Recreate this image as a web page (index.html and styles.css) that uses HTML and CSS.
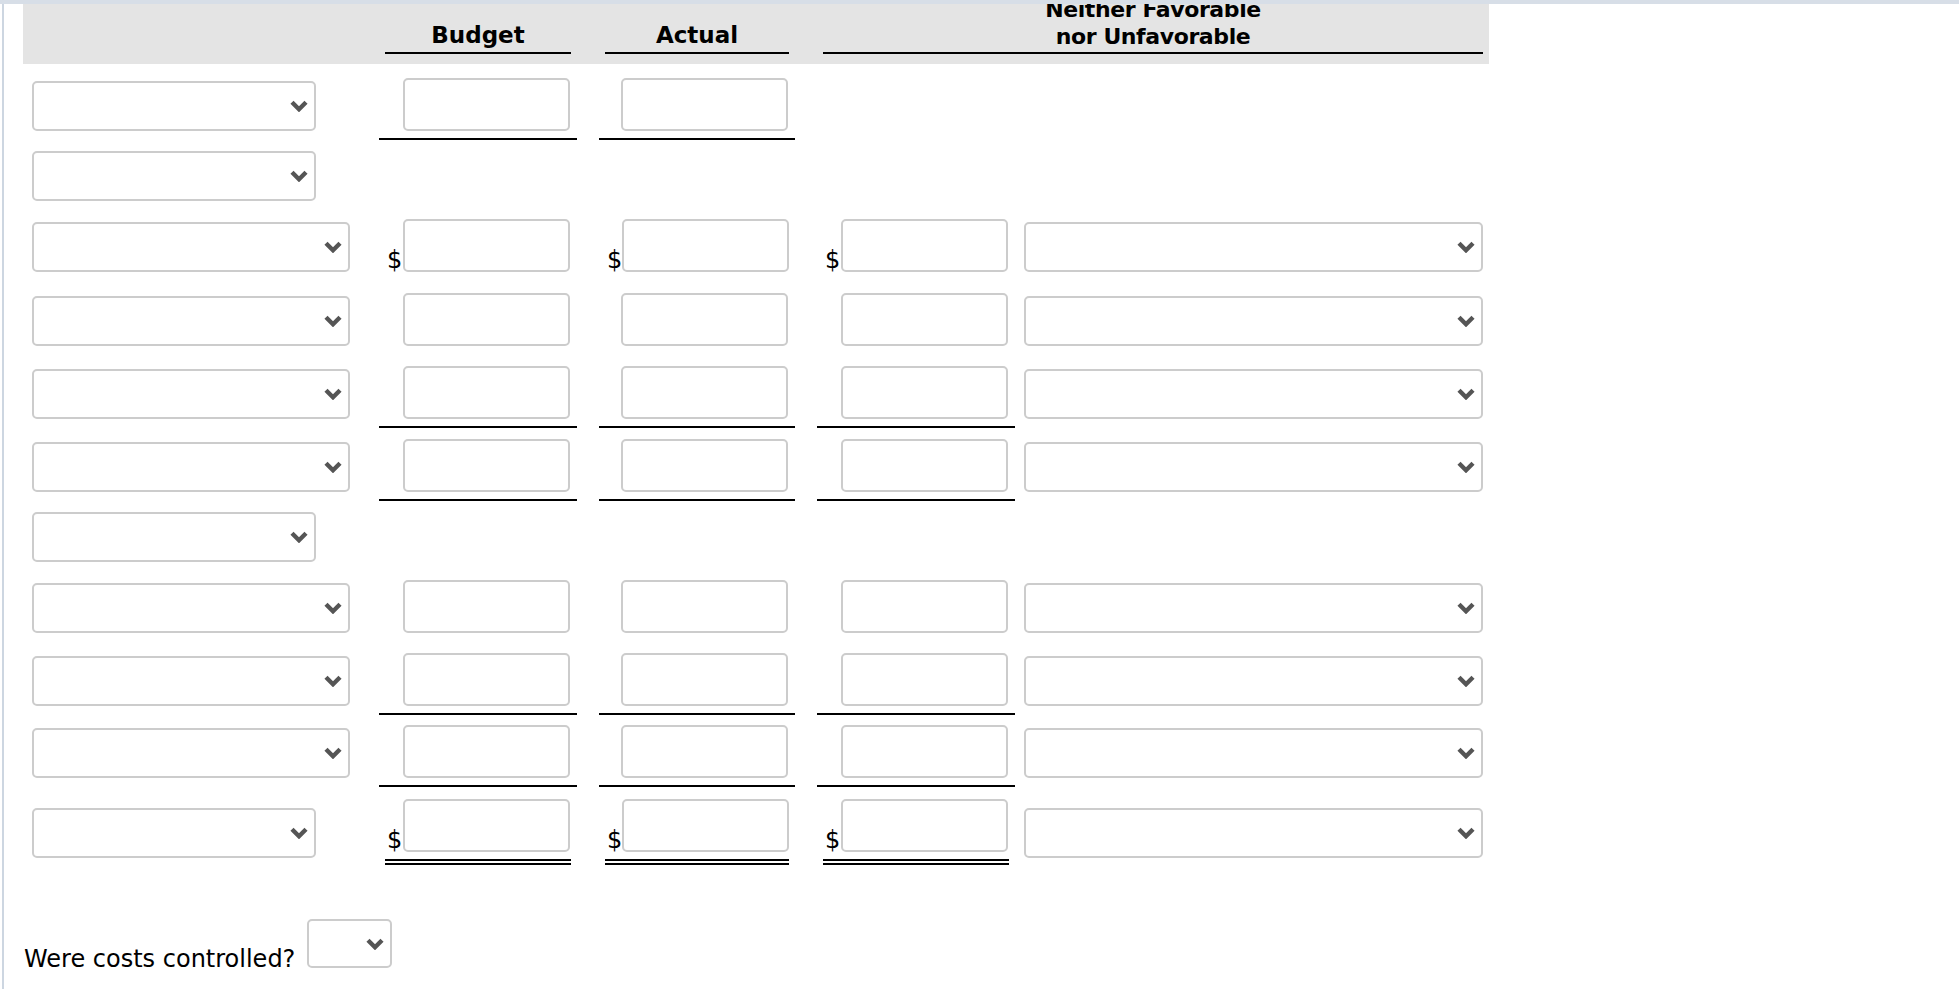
FILE: index.html
```html
<!DOCTYPE html>
<html lang="en">
<head>
<meta charset="utf-8">
<title>Flexible budget performance report</title>
<link rel="stylesheet" href="styles.css">
</head>
<body>
<div class="frame">
  <div class="panel">
    <div class="sheet">
      <div class="row head">
        <div class="hc c-bud">Budget</div>
        <div class="hc c-act">Actual</div>
        <div class="hc c-fav hc-wide">Favorable, Unfavorable, or<br>Neither Favorable<br>nor Unfavorable</div>
      </div>

      <div class="row h76">
        <div class="c-lab"><div class="sel narrow"><svg class="chev" viewBox="0 0 18 12"><polyline points="2,2.2 9,9.2 16,2.2"/></svg></div></div>
        <div class="amt ul c-bud"><div class="amt-in"><input class="box" type="text" aria-label="Budget"></div></div>
        <div class="amt ul c-act"><div class="amt-in"><input class="box" type="text" aria-label="Actual"></div></div>
      </div>

      <div class="row h70">
        <div class="c-lab"><div class="sel narrow"><svg class="chev" viewBox="0 0 18 12"><polyline points="2,2.2 9,9.2 16,2.2"/></svg></div></div>
      </div>

      <div class="row h71">
        <div class="c-lab"><div class="sel wide"><svg class="chev" viewBox="0 0 18 12"><polyline points="2,2.2 9,9.2 16,2.2"/></svg></div></div>
        <div class="amt c-bud"><div class="amt-in"><span class="dollar">$</span><input class="box" type="text" aria-label="Budget"></div></div>
        <div class="amt c-act"><div class="amt-in"><span class="dollar">$</span><input class="box" type="text" aria-label="Actual"></div></div>
        <div class="amt c-fav"><div class="amt-in"><span class="dollar">$</span><input class="box" type="text" aria-label="Variance"></div></div>
        <div class="c-dir"><div class="sel dir"><svg class="chev" viewBox="0 0 18 12"><polyline points="2,2.2 9,9.2 16,2.2"/></svg></div></div>
      </div>

      <div class="row h74">
        <div class="c-lab"><div class="sel wide"><svg class="chev" viewBox="0 0 18 12"><polyline points="2,2.2 9,9.2 16,2.2"/></svg></div></div>
        <div class="amt c-bud"><div class="amt-in"><input class="box" type="text" aria-label="Budget"></div></div>
        <div class="amt c-act"><div class="amt-in"><input class="box" type="text" aria-label="Actual"></div></div>
        <div class="amt c-fav"><div class="amt-in"><input class="box" type="text" aria-label="Variance"></div></div>
        <div class="c-dir"><div class="sel dir"><svg class="chev" viewBox="0 0 18 12"><polyline points="2,2.2 9,9.2 16,2.2"/></svg></div></div>
      </div>

      <div class="row h73">
        <div class="c-lab"><div class="sel wide"><svg class="chev" viewBox="0 0 18 12"><polyline points="2,2.2 9,9.2 16,2.2"/></svg></div></div>
        <div class="amt ul c-bud"><div class="amt-in"><input class="box" type="text" aria-label="Budget"></div></div>
        <div class="amt ul c-act"><div class="amt-in"><input class="box" type="text" aria-label="Actual"></div></div>
        <div class="amt ul c-fav"><div class="amt-in"><input class="box" type="text" aria-label="Variance"></div></div>
        <div class="c-dir"><div class="sel dir"><svg class="chev" viewBox="0 0 18 12"><polyline points="2,2.2 9,9.2 16,2.2"/></svg></div></div>
      </div>

      <div class="row h73">
        <div class="c-lab"><div class="sel wide"><svg class="chev" viewBox="0 0 18 12"><polyline points="2,2.2 9,9.2 16,2.2"/></svg></div></div>
        <div class="amt ul c-bud"><div class="amt-in"><input class="box" type="text" aria-label="Budget"></div></div>
        <div class="amt ul c-act"><div class="amt-in"><input class="box" type="text" aria-label="Actual"></div></div>
        <div class="amt ul c-fav"><div class="amt-in"><input class="box" type="text" aria-label="Variance"></div></div>
        <div class="c-dir"><div class="sel dir"><svg class="chev" viewBox="0 0 18 12"><polyline points="2,2.2 9,9.2 16,2.2"/></svg></div></div>
      </div>

      <div class="row h70">
        <div class="c-lab"><div class="sel narrow"><svg class="chev" viewBox="0 0 18 12"><polyline points="2,2.2 9,9.2 16,2.2"/></svg></div></div>
      </div>

      <div class="row h71">
        <div class="c-lab"><div class="sel wide"><svg class="chev" viewBox="0 0 18 12"><polyline points="2,2.2 9,9.2 16,2.2"/></svg></div></div>
        <div class="amt c-bud"><div class="amt-in"><input class="box" type="text" aria-label="Budget"></div></div>
        <div class="amt c-act"><div class="amt-in"><input class="box" type="text" aria-label="Actual"></div></div>
        <div class="amt c-fav"><div class="amt-in"><input class="box" type="text" aria-label="Variance"></div></div>
        <div class="c-dir"><div class="sel dir"><svg class="chev" viewBox="0 0 18 12"><polyline points="2,2.2 9,9.2 16,2.2"/></svg></div></div>
      </div>

      <div class="row h73">
        <div class="c-lab"><div class="sel wide"><svg class="chev" viewBox="0 0 18 12"><polyline points="2,2.2 9,9.2 16,2.2"/></svg></div></div>
        <div class="amt ul c-bud"><div class="amt-in"><input class="box" type="text" aria-label="Budget"></div></div>
        <div class="amt ul c-act"><div class="amt-in"><input class="box" type="text" aria-label="Actual"></div></div>
        <div class="amt ul c-fav"><div class="amt-in"><input class="box" type="text" aria-label="Variance"></div></div>
        <div class="c-dir"><div class="sel dir"><svg class="chev" viewBox="0 0 18 12"><polyline points="2,2.2 9,9.2 16,2.2"/></svg></div></div>
      </div>

      <div class="row h72">
        <div class="c-lab"><div class="sel wide"><svg class="chev" viewBox="0 0 18 12"><polyline points="2,2.2 9,9.2 16,2.2"/></svg></div></div>
        <div class="amt ul c-bud"><div class="amt-in"><input class="box" type="text" aria-label="Budget"></div></div>
        <div class="amt ul c-act"><div class="amt-in"><input class="box" type="text" aria-label="Actual"></div></div>
        <div class="amt ul c-fav"><div class="amt-in"><input class="box" type="text" aria-label="Variance"></div></div>
        <div class="c-dir"><div class="sel dir"><svg class="chev" viewBox="0 0 18 12"><polyline points="2,2.2 9,9.2 16,2.2"/></svg></div></div>
      </div>

      <div class="row h78 total">
        <div class="c-lab"><div class="sel narrow"><svg class="chev" viewBox="0 0 18 12"><polyline points="2,2.2 9,9.2 16,2.2"/></svg></div></div>
        <div class="amt tot c-bud"><div class="amt-in"><span class="dollar">$</span><input class="box" type="text" aria-label="Budget"></div></div>
        <div class="amt tot c-act"><div class="amt-in"><span class="dollar">$</span><input class="box" type="text" aria-label="Actual"></div></div>
        <div class="amt tot c-fav"><div class="amt-in"><span class="dollar">$</span><input class="box" type="text" aria-label="Variance"></div></div>
        <div class="c-dir"><div class="sel dir"><svg class="chev" viewBox="0 0 18 12"><polyline points="2,2.2 9,9.2 16,2.2"/></svg></div></div>
      </div>
    </div>

    <div class="question">
      <span class="q-text">Were costs controlled?</span>
      <div class="sel tiny"><svg class="chev" viewBox="0 0 18 12"><polyline points="2,2.2 9,9.2 16,2.2"/></svg></div>
    </div>
  </div>
</div>
</body>
</html>
```

FILE: styles.css
```css
html, body {
  margin: 0;
  padding: 0;
  background: #ffffff;
}

body {
  font-family: "DejaVu Sans", Verdana, sans-serif;
  color: #000;
}

.frame {
  box-sizing: border-box;
  height: 100vh;
  border-top: 4px solid #d7dee7;
  padding-left: 2px;
  overflow: hidden;
  display: flex;
}

.panel {
  flex: 1;
  border-left: 2px solid #cdd6e1;
  padding-left: 19px;
}

.sheet {
  width: 1466px;
  margin-top: -35px;
}

.row {
  display: grid;
  grid-template-columns: 356px 198px 22px 196px 22px 198px 474px;
  align-items: end;
}

.h70 { height: 70px; }
.h71 { height: 71px; }
.h72 { height: 72px; }
.h73 { height: 73px; }
.h74 { height: 74px; }
.h76 { height: 76px; }
.h78 { height: 78px; }

.c-lab { grid-column: 1; }
.c-bud { grid-column: 2; }
.c-act { grid-column: 4; }
.c-fav { grid-column: 6; }
.c-dir { grid-column: 7; }

/* header */
.head {
  background: #e4e4e4;
}

.hc {
  margin: 0 6px 10px;
  padding-bottom: 3px;
  border-bottom: 2px solid #000;
  text-align: center;
  font-weight: bold;
  font-size: 23px;
  line-height: 27px;
}

.hc-wide {
  grid-column: 6 / span 2;
  font-size: 22px;
  letter-spacing: -0.4px;
  padding-bottom: 2px;
}

/* amount cells */
.amt {
  padding-bottom: 7px;
  border-bottom: 2px solid transparent;
}

.amt.ul {
  border-bottom-color: #000;
}

.amt-in {
  margin: 0 6px;
  padding: 0 1px;
  display: flex;
  align-items: flex-end;
}

.amt.tot {
  padding-bottom: 0;
  border-bottom: 0;
}

.amt.tot .amt-in {
  padding-bottom: 7px;
  border-bottom: 6px double #000;
}

.dollar {
  font-size: 24px;
  line-height: 24px;
  padding-left: 1px;
}

.box {
  display: block;
  box-sizing: border-box;
  margin: 0 0 0 auto;
  width: 167px;
  height: 53px;
  border: 2px solid #cccccc;
  border-radius: 5px;
  background: #fff;
  padding: 0 6px;
  font: inherit;
  outline: none;
}

/* select-like dropdowns */
.sel {
  box-sizing: border-box;
  height: 50px;
  border: 2px solid #cccccc;
  border-radius: 5px;
  background: #fff;
  display: flex;
  align-items: center;
  justify-content: flex-end;
  padding-right: 6px;
  margin-bottom: 9px;
}

.total .sel {
  margin-bottom: 7px;
}

.c-lab .sel {
  margin-left: 9px;
}

.sel.narrow { width: 284px; }
.sel.wide { width: 318px; }

.sel.dir {
  margin-left: 9px;
  width: 459px;
}

.chev {
  width: 18px;
  height: 12px;
  display: block;
}

.chev polyline {
  fill: none;
  stroke: #555555;
  stroke-width: 4.4;
  stroke-linejoin: miter;
}

/* question */
.question {
  display: flex;
  align-items: flex-end;
  gap: 12px;
  margin-top: 54px;
  padding-left: 1px;
}

.q-text {
  font-size: 24px;
  line-height: 24px;
  margin-bottom: -3px;
}

.sel.tiny {
  width: 85px;
  height: 49px;
  margin-bottom: 0;
}
```
